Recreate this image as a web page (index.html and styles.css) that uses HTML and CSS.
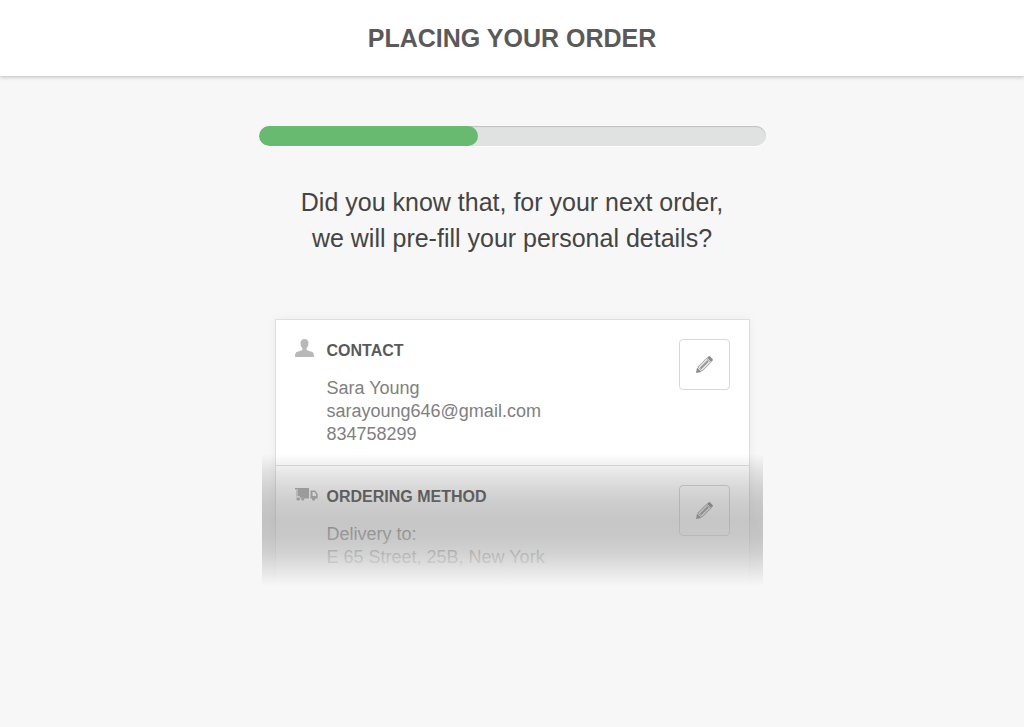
FILE: index.html
```html
<!DOCTYPE html>
<html lang="en">
    <head>
        <meta charset="UTF-8">
        <title>Placing your order</title>
        <link rel="stylesheet" href="styles.css">
    </head>

    <body>
        <header class="header">
            <h1 class="header-title">PLACING YOUR ORDER</h1>
        </header>

        <main class="content">
            <div class="progress" role="progressbar" aria-label="Order progress" aria-valuenow="43" aria-valuemin="0" aria-valuemax="100">
                <div class="progress-bar" style="width: 43.2%"></div>
            </div>

            <p class="message">Did you know that, for your next order,<br>we will pre-fill your personal details?</p>

            <div class="preview">
                <div class="card">
                    <section class="row">
                        <div class="row-icon">
                            <svg width="19" height="18" viewBox="0 0 19 18" fill="#b8b8b8">
                                <path d="M9.500 0C12 0 13.500 1.800 13.500 4.400C13.500 6.500 12.600 8 11.600 9V11C12.500 12 17 12 18.300 14C18.800 15 19 16.500 19 18H0C0 16.500 .2 15 .7 14C2 12 6.500 12 7.400 11V9C6.400 8 5.500 6.500 5.500 4.400C5.500 1.800 7 0 9.500 0Z"/>
                            </svg>
                        </div>
                        <div class="row-body">
                            <h2 class="row-title">CONTACT</h2>
                            <p class="row-text">Sara Young<br>sarayoung646@gmail.com<br>834758299</p>
                        </div>
                        <button class="edit" type="button" aria-label="Edit contact">
                            <svg width="17" height="17" viewBox="0 0 17 17">
                                <path d="M0 17L1 11.500L5.500 16Z" fill="#8c8c8c"/>
                                <path d="M1.800 11L10.500 2.300L14.700 6.500L6 15.200Z" fill="#e4e4e4" stroke="#a2a2a2"/>
                                <path d="M4.500 12.500L12 5" fill="none" stroke="#999" stroke-width="2"/>
                                <path d="M11 1.800L12.500 .4Q13.300 -.2 14.100 .5L16.500 2.900Q17.200 3.700 16.600 4.500L15.200 6Z" fill="#8c8c8c"/>
                            </svg>
                        </button>
                    </section>

                    <section class="row">
                        <div class="row-icon">
                            <svg width="23" height="13" viewBox="0 0 23 13" fill="#b0b0b0">
                                <path d="M0 0H14V10.500H9.500A2 2 0 0 0 6 10.500H5.500A2 2 0 0 0 1 10V8.500H3V7.500H1V6.500H3V5.500H1V4.500H3V3.500H1V2.500H3V1.500H0Z"/>
                                <circle cx="3.200" cy="11" r="1.800"/>
                                <circle cx="7.800" cy="11" r="1.600"/>
                                <path d="M15.500 2.500H19.500Q20.500 2.500 21 3.500L22.700 6V10.500H20.500A2 2 0 0 1 16.700 10.500H15.500ZM17.500 4V8H21V6L19.500 4Z" fill-rule="evenodd"/>
                                <circle cx="18.600" cy="11" r="1.700"/>
                            </svg>
                        </div>
                        <div class="row-body">
                            <h2 class="row-title">ORDERING METHOD</h2>
                            <p class="row-text">Delivery to:<br>E 65 Street, 25B, New York</p>
                        </div>
                        <button class="edit" type="button" aria-label="Edit ordering method">
                            <svg width="17" height="17" viewBox="0 0 17 17">
                                <path d="M0 17L1 11.500L5.500 16Z" fill="#8c8c8c"/>
                                <path d="M1.800 11L10.500 2.300L14.700 6.500L6 15.200Z" fill="#e4e4e4" stroke="#a2a2a2"/>
                                <path d="M4.500 12.500L12 5" fill="none" stroke="#999" stroke-width="2"/>
                                <path d="M11 1.800L12.500 .4Q13.300 -.2 14.100 .5L16.500 2.900Q17.200 3.700 16.600 4.500L15.200 6Z" fill="#8c8c8c"/>
                            </svg>
                        </button>
                    </section>
                </div>
            </div>
        </main>
    </body>
</html>
```

FILE: styles.css
```css
* {
    box-sizing: border-box;
}

body {
    margin: 0;
    background-color: #f7f7f7;
    color: #444;
    font-family: "Liberation Sans", Arial, sans-serif;
}

.header {
    padding: 23px 20px;
    background-color: #fff;
    box-shadow: 0 1px 4px rgba(0, 0, 0, 0.25);
    text-align: center;
}

.header-title {
    margin: 0;
    color: #5a5a5a;
    font-size: 25px;
    line-height: 30px;
}

.content {
    max-width: 507px;
    margin: 0 auto;
    padding-top: 50px;
}

.progress {
    height: 20px;
    border-radius: 10px;
    background-color: #e0e2e1;
    box-shadow: inset 0 1px 1px #c0c0c0, 0 1px 0 #fff;
    overflow: hidden;
}

.progress-bar {
    height: 100%;
    border-radius: 10px;
    background-color: #67ba70;
}

.message {
    margin: 38px 0 0;
    font-size: 25px;
    line-height: 36px;
    text-align: center;
}

.preview {
    position: relative;
    max-width: 501px;
    margin: 63px auto 0;
    padding: 0 13px;
}

/* fades the lower part of the card into the page */
.preview::after {
    content: "";
    position: absolute;
    right: 0;
    bottom: 0;
    left: 0;
    height: 132px;
    background: linear-gradient(
        rgba(0, 0, 0, 0),
        rgba(40, 40, 40, 0.1),
        rgba(80, 80, 80, 0.22),
        rgba(115, 115, 115, 0.36),
        rgba(142, 142, 142, 0.5),
        rgba(168, 168, 168, 0.63),
        rgba(196, 196, 196, 0.77),
        rgba(225, 225, 225, 0.9),
        #f7f7f7
    );
    pointer-events: none;
}

.card {
    border: 1px solid #dfdfdf;
    background-color: #fff;
    box-shadow: 0 0 10px rgba(0, 0, 0, 0.05);
}

.row {
    display: flex;
    align-items: flex-start;
    padding: 19px;
}

.row + .row {
    padding-bottom: 16px;
    border-top: 1px solid #dfdfdf;
}

.row-icon {
    display: flex;
    align-items: center;
    width: 32px;
    height: 18px;
}

.row-body {
    flex: 1;
}

.row-title {
    margin: 2px 0 16px;
    color: #5a5a5a;
    font-size: 16px;
    line-height: 20px;
}

.row-text {
    margin: 0;
    color: #808080;
    font-size: 18px;
    line-height: 23px;
}

.edit {
    display: flex;
    align-items: center;
    justify-content: center;
    width: 51px;
    height: 51px;
    padding: 0;
    border: 1px solid #d8d8d8;
    border-radius: 4px;
    background-color: transparent;
}
```
